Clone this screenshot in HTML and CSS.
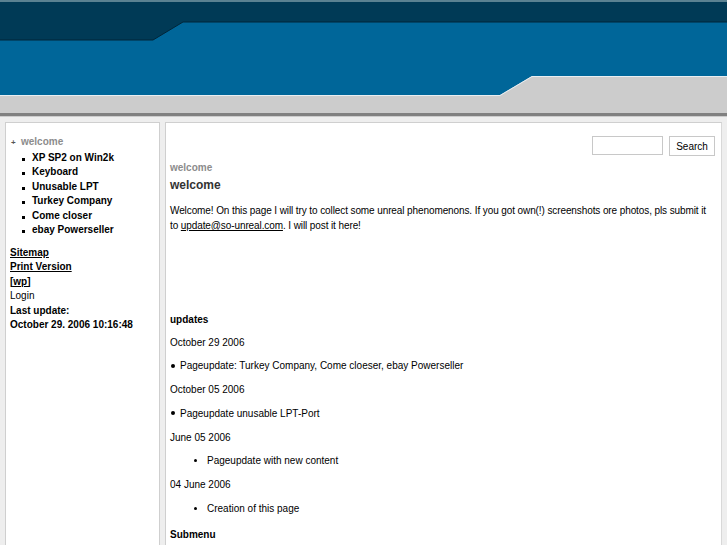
FILE: index.html
```html
<!DOCTYPE html>
<html>
<head>
<meta charset="utf-8">
<title>so-unreal</title>
<link rel="stylesheet" href="styles.css">
</head>
<body>
<div class="header">
  <svg class="header-art" width="727" height="117" viewBox="0 0 727 117" preserveAspectRatio="none">
    <rect x="0" y="0" width="727" height="117" fill="#cccccc"/>
    <polygon points="0,0 727,0 727,76 532,76 500,95 0,95" fill="#006699"/>
    <polygon points="0,0 727,0 727,22 183,22 153,40 0,40" fill="#003a56"/>
    <polyline points="0,40 153,40 183,22 727,22" fill="none" stroke="#002538" stroke-width="1"/>
    <polyline points="0,95.5 500,95.5 532,76.5 727,76.5" fill="none" stroke="#e8eef2" stroke-width="1"/>
    <rect x="0" y="0" width="727" height="2" fill="#5a8292"/>
    <rect x="0" y="113" width="727" height="3" fill="#808080"/>
  </svg>
</div>
<div class="page">
  <div class="sidebar">
    <ul class="menu">
      <li class="menu-top"><span class="plus">+</span><a class="current">welcome</a>
        <ul class="submenu">
          <li>XP SP2 on Win2k</li>
          <li>Keyboard</li>
          <li>Unusable LPT</li>
          <li>Turkey Company</li>
          <li>Come closer</li>
          <li>ebay Powerseller</li>
        </ul>
      </li>
    </ul>
    <div class="links">
      <a class="ul">Sitemap</a>
      <a class="ul">Print Version</a>
      <a class="ul">[wp]</a>
      <span class="plain">Login</span>
      <span>Last update:</span>
      <span>October 29. 2006 10:16:48</span>
    </div>
  </div>
  <div class="main">
    <div class="search">
      <input class="search-input" type="text">
      <button class="search-btn">Search</button>
    </div>
    <div class="crumb">welcome</div>
    <h1 class="title">welcome</h1>
    <p class="text intro">Welcome! On this page I will try to collect some unreal phenomenons. If you got own(!) screenshots ore photos, pls submit it to <a class="mail">update@so-unreal.com</a>. I will post it here!</p>
    <h2 class="sub">updates</h2>
    <p class="text">October 29 2006</p>
    <ul class="flat"><li>Pageupdate: Turkey Company, Come cloeser, ebay Powerseller</li></ul>
    <p class="text">October 05 2006</p>
    <ul class="flat"><li>Pageupdate unusable LPT-Port</li></ul>
    <p class="text">June 05 2006</p>
    <ul class="indent"><li>Pageupdate with new content</li></ul>
    <p class="text">04 June 2006</p>
    <ul class="indent"><li>Creation of this page</li></ul>
    <h2 class="sub last">Submenu</h2>
  </div>
</div>
</body>
</html>
```

FILE: styles.css
```css
html, body {
  margin: 0;
  padding: 0;
}
body {
  background: #eeeeee;
  font-family: "Liberation Sans", Arial, Helvetica, sans-serif;
  font-size: 10px;
  color: #000;
  overflow: hidden;
}
.header {
  height: 117px;
}
.header-art {
  display: block;
  width: 100%;
  height: 117px;
}
.page {
  display: flex;
  align-items: flex-start;
  gap: 5px;
  padding: 5px 5px 0 5px;
}
.sidebar {
  width: 155px;
  flex: none;
  background: #fff;
  border: 1px solid #cfcfcf;
  padding: 12px 0 20px 0;
  height: 500px;
  box-sizing: border-box;
}
.menu {
  list-style: none;
  margin: 0;
  padding: 0 0 0 5px;
}
.menu-top {
  font-weight: bold;
  line-height: 14.5px;
}
.plus {
  display: inline-block;
  width: 10px;
  font-size: 8px;
  color: #555;
  text-align: left;
}
.current {
  color: #8c8c8c;
}
.submenu {
  list-style: none;
  margin: 0;
  padding: 0 0 0 11px;
}
.submenu li {
  color: #000;
  display: flex;
  align-items: center;
}
.submenu li::before {
  content: "";
  width: 3px;
  height: 3px;
  background: #000;
  margin: 3px 7px 0 0;
  flex: none;
}
.links {
  display: flex;
  flex-direction: column;
  padding: 8px 0 0 4px;
  line-height: 14.5px;
  font-weight: bold;
}
.links .ul {
  text-decoration: underline;
  color: #000;
}
.links .plain {
  font-weight: normal;
}
.main {
  flex: 1;
  background: #fff;
  border: 1px solid #cfcfcf;
  border-right-color: #d8d8d8;
  padding: 13px 4px 0 4px;
  height: 520px;
  box-sizing: border-box;
}
.search {
  display: flex;
  justify-content: flex-end;
  gap: 6px;
  padding-right: 2px;
}
.search-input {
  width: 71px;
  height: 19px;
  box-sizing: border-box;
  border: 1px solid #c8c8c8;
  margin: 0;
  padding: 0;
  background: #fff;
}
.search-btn {
  height: 20px;
  width: 46px;
  box-sizing: border-box;
  border: 1px solid #c8c8c8;
  background: #fff;
  font-family: "Liberation Sans", Arial, sans-serif;
  font-size: 10px;
  padding: 0;
  color: #000;
}
.crumb {
  color: #8c8c8c;
  font-weight: bold;
  font-size: 10px;
  margin-top: 6px;
  line-height: 12px;
}
.title {
  font-size: 12px;
  font-weight: bold;
  color: #333;
  margin: 4px 0 0 0;
  line-height: 15px;
}
.text {
  margin: 9px 0 0 0;
  line-height: 14.7px;
}
.intro {
  margin-top: 10px;
  padding-right: 6px;
  line-height: 15px;
  letter-spacing: -0.1px;
}
.mail {
  color: #000;
  text-decoration: underline;
}
.sub {
  font-size: 10px;
  font-weight: bold;
  margin: 80px 0 0 0;
  line-height: 14.7px;
}
.main .sub + .text {
  margin-top: 8px;
}
.main .text + ul {
  margin: 9px 0 0 0;
  line-height: 14.7px;
}
.flat {
  list-style: none;
  padding: 0;
}
.flat li::before {
  content: "";
  display: inline-block;
  width: 4px;
  height: 4px;
  border-radius: 50%;
  background: #000;
  margin: 0 5px 2px 1px;
  vertical-align: middle;
}
.indent {
  list-style: disc;
  padding: 0 0 0 37px;
}
.indent li {
  padding-left: 0;
}
.main .last {
  margin-top: 12px;
}
```
